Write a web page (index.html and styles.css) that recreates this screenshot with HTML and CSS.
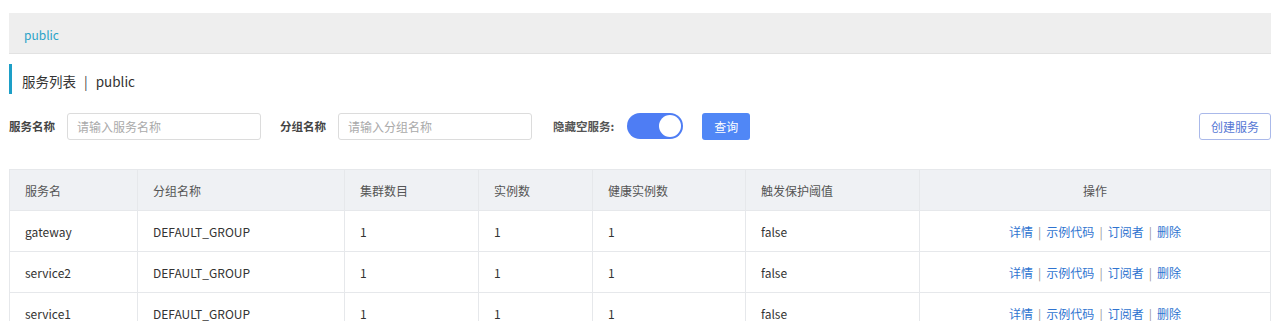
FILE: index.html
```html
<!DOCTYPE html>
<html><head>
    <meta charset="UTF-8">
    <title>服务列表</title>
    <link rel="stylesheet" href="styles.css">
</head>
<body>
    <div class="page">
        <div class="crumb">public</div>
        <div class="page-title">服务列表<span class="title-sep">|</span>public</div>
        <div class="filters">
            <label class="filter-label">服务名称</label>
            <input class="filter-input" type="text" placeholder="请输入服务名称">
            <label class="filter-label">分组名称</label>
            <input class="filter-input" type="text" placeholder="请输入分组名称">
            <label class="filter-label light">隐藏空服务:</label>
            <span class="switch"><span class="knob"></span></span>
            <button class="btn-primary">查询</button>
            <button class="btn-outline">创建服务</button>
        </div>
        <table class="service-table">
            <colgroup>
                <col style="width:128px">
                <col style="width:207px">
                <col style="width:134px">
                <col style="width:114px">
                <col style="width:153px">
                <col style="width:174px">
                <col>
            </colgroup>
            <thead>
                <tr>
                    <th>服务名</th>
                    <th>分组名称</th>
                    <th>集群数目</th>
                    <th>实例数</th>
                    <th>健康实例数</th>
                    <th>触发保护阈值</th>
                    <th class="center">操作</th>
                </tr>
            </thead>
            <tbody>
                <tr>
                    <td>gateway</td>
                    <td>DEFAULT_GROUP</td>
                    <td>1</td>
                    <td>1</td>
                    <td>1</td>
                    <td>false</td>
                    <td class="center actions"><a href="#">详情</a><span class="sep">|</span><a href="#">示例代码</a><span class="sep">|</span><a href="#">订阅者</a><span class="sep">|</span><a href="#">删除</a></td>
                </tr>
                <tr>
                    <td>service2</td>
                    <td>DEFAULT_GROUP</td>
                    <td>1</td>
                    <td>1</td>
                    <td>1</td>
                    <td>false</td>
                    <td class="center actions"><a href="#">详情</a><span class="sep">|</span><a href="#">示例代码</a><span class="sep">|</span><a href="#">订阅者</a><span class="sep">|</span><a href="#">删除</a></td>
                </tr>
                <tr>
                    <td>service1</td>
                    <td>DEFAULT_GROUP</td>
                    <td>1</td>
                    <td>1</td>
                    <td>1</td>
                    <td>false</td>
                    <td class="center actions"><a href="#">详情</a><span class="sep">|</span><a href="#">示例代码</a><span class="sep">|</span><a href="#">订阅者</a><span class="sep">|</span><a href="#">删除</a></td>
                </tr>
            </tbody>
        </table>
    </div>
</body>
</html>
```

FILE: styles.css
```css
body {
    margin: 0;
    background-color: #fff;
    color: #333;
    font-family: 'Noto Sans CJK SC', 'Noto Sans', sans-serif;
    font-size: 12px;
}
.page {
    padding: 13px 9px 0 9px;
}
.crumb {
    height: 40px;
    line-height: 44px;
    background-color: #eeeeee;
    border-bottom: 1px solid #e2e2e2;
    padding-left: 15px;
    color: #2ba3c8;
    font-size: 12px;
}
.page-title {
    margin-top: 10px;
    height: 30px;
    line-height: 34px;
    border-left: 3px solid #1d9fc7;
    padding-left: 10px;
    font-size: 13.5px;
    color: #333;
}
.title-sep {
    margin: 0 8px;
    color: #444;
}
.filters {
    display: flex;
    align-items: center;
    margin-top: 18px;
    height: 28px;
}
.filter-label {
    font-weight: bold;
    font-size: 11.5px;
    color: #444;
    margin-right: 12px;
}
.filter-label.light {
    color: #555;
    margin-left: 2px;
    margin-right: 13px;
}
.filter-input {
    box-sizing: border-box;
    width: 194px;
    height: 27px;
    border: 1px solid #dcdcdc;
    border-radius: 3px;
    padding: 0 9px;
    margin-right: 19px;
    font-family: inherit;
    font-size: 12px;
    color: #333;
    outline: none;
}
.filter-input::placeholder {
    color: #aaa;
}
.switch {
    position: relative;
    display: inline-block;
    width: 56px;
    height: 26px;
    border-radius: 13px;
    background-color: #4e7df4;
}
.switch .knob {
    position: absolute;
    top: 2px;
    right: 2px;
    width: 22px;
    height: 22px;
    border-radius: 50%;
    background-color: #fff;
}
.btn-primary {
    box-sizing: border-box;
    margin-left: 19px;
    width: 48px;
    height: 27px;
    border: none;
    border-radius: 3px;
    background-color: #5087f6;
    color: #fff;
    font-family: inherit;
    font-size: 12px;
}
.btn-outline {
    box-sizing: border-box;
    margin-left: auto;
    width: 72px;
    height: 27px;
    border: 1px solid #aab9ea;
    border-radius: 3px;
    background-color: #fff;
    color: #5677d4;
    font-family: inherit;
    font-size: 12px;
}
.service-table {
    width: 100%;
    margin-top: 29px;
    border-collapse: collapse;
    table-layout: fixed;
    border: 1px solid #e6e8eb;
}
.service-table th,
.service-table td {
    height: 40px;
    padding: 0 15px;
    border: 1px solid #e6e8eb;
    text-align: left;
    font-weight: normal;
    white-space: nowrap;
}
.service-table th {
    background-color: #eff1f4;
    color: #555;
}
.service-table td {
    color: #333;
}
.service-table .center {
    text-align: center;
}
.actions a {
    color: #2f74d0;
    text-decoration: none;
}
.actions .sep {
    color: #999;
    margin: 0 5px;
}
```
